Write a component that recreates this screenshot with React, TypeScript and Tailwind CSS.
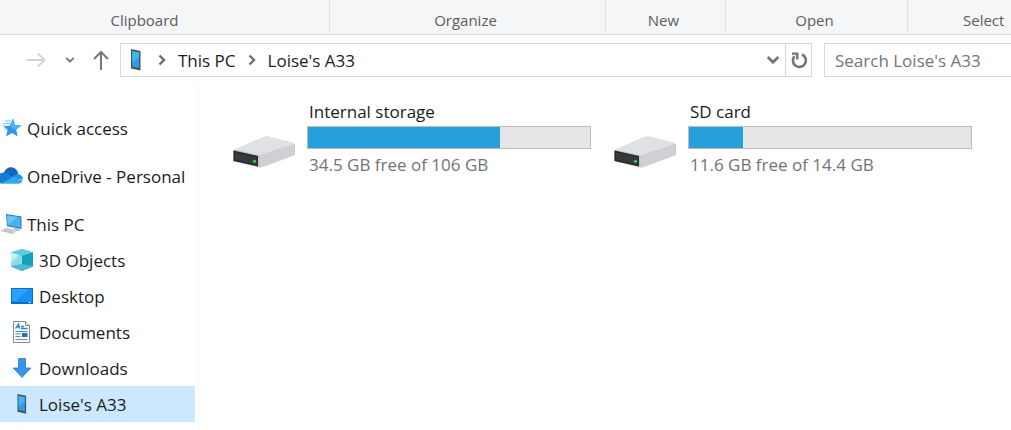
import type { ReactNode } from "react";

function PhoneIcon({ className }: { className: string }) {
  return (
    <svg viewBox="0 0 12 24" className={className} aria-hidden="true">
      <path d="M1 1 10.5 3V22.5L1 20.5Z" fill="#4a545d" />
      <path d="M2.2 3.2 9 4.6V19.8L2.2 18.4Z" fill="#2b9fe8" />
      <path d="M2.2 3.2 9 4.6V10L2.2 14Z" fill="#45b2f3" />
    </svg>
  );
}

function StarIcon() {
  return (
    <svg viewBox="0 0 22 22" className="h-[22px] w-[22px]" aria-hidden="true">
      <path d="M13 1.500 15 8 21.500 8.600 16.200 12.600 17.600 19.500 12 16 6 19.500 7.600 12.800 3.500 9.500 10 8.400Z" fill="#2e96e6" />
      <path d="M13 1.500 15 8 21.500 8.600 16.200 12.600 12.200 11.600 10 8.400Z" fill="#4db2f3" />
      <path d="M5 4h6M3.500 6.500h6.500M2.500 9h4M4 12h3" stroke="#7cc2f3" strokeWidth="1.100" />
    </svg>
  );
}

function CloudIcon() {
  return (
    <svg viewBox="1 0 24 22" className="h-[22px] w-6" aria-hidden="true">
      <path d="M5 7.500A7.300 7.300 0 0 1 19.300 9.300L13 13.500 4 8.800Z" fill="#1166bd" />
      <path d="M2 18.500A5.600 5.600 0 0 1 0 9 8 8 0 0 1 9 9L15 12.600 4 18.500Z" fill="#167dd2" />
      <path d="M13 12C15.500 9.400 18 9 19.400 9.300A5 5 0 0 1 24 14.400L16 14Z" fill="#1c96e0" />
      <path d="M2 18.300 14.500 12 23.600 15.500C23 17.500 21.300 18.700 19.300 18.700H5C3.800 18.700 2.700 18.500 2 18.300Z" fill="#30a9ee" />
    </svg>
  );
}

function ComputerIcon() {
  return (
    <svg viewBox="0 0 22 22" className="h-[22px] w-[22px]" aria-hidden="true">
      <path d="M6 1 21.500 3.500V16L7 13.300Z" fill="#2877b0" />
      <path d="M7 2.200 20.500 4.400V14.700L7.800 12.300Z" fill="#43b3ef" />
      <path d="M7 2.200 18 4 7.800 12.300Z" fill="#63c6f6" />
      <path d="M14 14.500 19 15.500 20.500 18 14 17.500Z" fill="#b6bec6" />
      <path d="M5 14.500 16.500 17 13 20.500 1 17.500Z" fill="#d9dee3" />
      <path d="M5 15.700 14 17.700M3.500 17 12.500 19" stroke="#a6afb8" strokeWidth=".7" />
      <path d="M1 17.500 13 20.500 16.500 17" fill="none" stroke="#a5afb8" strokeWidth=".8" />
    </svg>
  );
}

function CubeIcon() {
  return (
    <svg viewBox="0 0 22 22" className="h-[22px] w-[22px]" aria-hidden="true">
      <path d="M11 0 22 3.500V17.500L11 22 0 17.500V3.500Z" fill="#21a9c5" />
      <path d="M11 0 22 3.500 11 7 0 3.500Z" fill="#5fcbdf" />
      <path d="M0 3.500 11 7V15L0 17.500Z" fill="#8adeea" />
      <path d="M0 3.500 8 6 0 14Z" fill="#c2f1f5" />
      <path d="M11 7 22 3.500V17.500L11 15Z" fill="#149fbd" />
      <path d="M0 17.500 11 15 22 17.500 11 22Z" fill="#4dbbd0" />
    </svg>
  );
}

function DesktopIcon() {
  return (
    <svg viewBox="0 0 22 22" className="h-[22px] w-[22px]" aria-hidden="true">
      <rect x=".5" y="3.500" width="21" height="15" fill="#1593f3" stroke="#0b6fc4" />
      <path d="M1 4H18L5 16H1Z" fill="#2ba2f8" />
      <path d="M1 17.500H21" stroke="#0a65b2" />
      <path d="M17.500 17.500h2.500" stroke="#c3e6ff" />
    </svg>
  );
}

function DocumentIcon() {
  return (
    <svg viewBox="0 0 22 22" className="h-[22px] w-[22px]" aria-hidden="true">
      <path d="M2.500 .5H14.500L18.500 4.500V21.500H2.500Z" fill="#fbfcfd" stroke="#858c93" />
      <path d="M14.500 .5V4.500H18.500" fill="#e2e6e9" stroke="#858c93" />
      <path d="M4.500 7.500 7.500 3 8.500 7.500M5.500 6H8.500M10 5.500H13M10 7.500H16.500" fill="none" stroke="#248bc9" strokeWidth="1.300" />
      <path d="M4.500 10.500H16.500M4.500 13H9.500M4.500 15.500H9.500" stroke="#338fc8" strokeWidth="1.200" />
      <path d="M4.500 18.500H16.500" stroke="#8b9298" strokeWidth="1.200" />
      <rect x="11" y="12" width="5.500" height="4" fill="#2d6ea8" />
    </svg>
  );
}

function DownloadIcon() {
  return (
    <svg viewBox="0 0 22 22" className="h-[22px] w-[22px]" aria-hidden="true">
      <path d="M7.500 1.500H14.500V11H19.800L11 20.500 2.200 11H7.500Z" fill="#3693e5" stroke="#2680cf" strokeWidth=".8" />
    </svg>
  );
}

function MusicIcon() {
  return (
    <svg viewBox="0 0 22 22" className="h-[22px] w-[22px]" aria-hidden="true">
      <path d="M10.500 0C11 4 17 5 15.500 11 15 7.500 12.500 7 12 7V17A4 3.500 0 1 1 10.500 14Z" fill="#1f86c8" />
    </svg>
  );
}

function DriveIcon() {
  return (
    <svg viewBox="0 0 62 32" className="h-8 w-[62px] shrink-0" aria-hidden="true">
      <path d="M1 14 30 1.300Q33 .2 36 .8L60 7Q62 8 62 9.500V19L30 30.800Q27 32 24 31L1 25.500Q0 25 0 24V15Q0 14.300 1 14Z" fill="#c3c5ca" />
      <path d="M1 13.500 30 1.300Q33 .2 36 .8L60 7Q62 8 60 9L29 19Q27 19.600 25 19Z" fill="#e0e1e4" />
      <path d="M26.500 20Q27 18.800 30 18L61.500 8V19L30 30.800Q27.500 31.800 26.500 31Z" fill="#cfd0d5" />
      <path d="M.5 14.500 25 20V30.500L.5 25Z" fill="#292c2e" />
      <path d="M2 16.500 23.500 21.300V28.500L2 23.500Z" fill="#363a3b" />
      <circle cx="21.500" cy="25.300" r="1.600" fill="#40d14b" />
    </svg>
  );
}

function Chevron({ down = false, className }: { down?: boolean; className: string }) {
  return (
    <svg viewBox="0 0 12 12" className={className} fill="none" stroke="currentColor" strokeWidth="2.400" aria-hidden="true">
      <path d={down ? "M1.500 3.500 6 8 10.500 3.500" : "M3.500 1.500 8 6 3.500 10.500"} />
    </svg>
  );
}

function RibbonGroup({ label, className }: { label: string; className: string }) {
  return (
    <div className={`flex h-8 items-end border-[#e1e2e4] text-[15px] leading-6 text-[#5c5c5c] ${className}`}>
      {label}
    </div>
  );
}

type NavRowProps = { icon: ReactNode; label?: string; title?: string; nested?: boolean; selected?: boolean };

function NavRow({ icon, label, title, nested = false, selected = false }: NavRowProps) {
  return (
    <li>
      <a
        href="#"
        aria-label={title}
        aria-current={selected ? "page" : undefined}
        className={`mr-[3px] flex h-9 items-center whitespace-nowrap ${nested ? "pl-[11px]" : ""} ${selected ? "bg-[#cce8ff]" : ""}`}
      >
        <span className={`flex shrink-0 ${nested ? "w-7" : "w-[27px]"}`}>{icon}</span>
        {label && <span className="pt-0.5">{label}</span>}
      </a>
    </li>
  );
}

type Drive = { name: string; caption: string; used: number };

const drives: Drive[] = [
  { name: "Internal storage", caption: "34.5 GB free of 106 GB", used: 68 },
  { name: "SD card", caption: "11.6 GB free of 14.4 GB", used: 19 },
];

function DriveTile({ name, caption, used }: Drive) {
  return (
    <li className="flex w-[358px] items-center gap-3">
      <div className="pt-6">
        <DriveIcon />
      </div>
      <div className="min-w-0 flex-1">
        <div className="pl-0.5 leading-7">{name}</div>
        <div className="h-[23px] border border-[#bcbcbc] bg-[#e6e6e6]" role="meter" aria-label={name} aria-valuenow={used} aria-valuemin={0} aria-valuemax={100}>
          <div className="h-full bg-[#26a0da]" style={{ width: `${used}%` }} />
        </div>
        <div className="pl-0.5 leading-8 text-[#737373]">{caption}</div>
      </div>
    </li>
  );
}

export default function App() {
  return (
    <div className="flex h-screen flex-col overflow-hidden bg-white font-['Open_Sans','Noto_Sans',sans-serif] text-[17px] text-[#1b1b1b]">
      <header className="flex h-[35px] shrink-0 border-b border-[#dadbdc] bg-[#f5f6f7]">
        <RibbonGroup label="Clipboard" className="w-[330px] justify-center border-r pr-10" />
        <RibbonGroup label="Organize" className="w-[276px] justify-center border-r pr-1" />
        <RibbonGroup label="New" className="w-[120px] justify-center border-r pr-1" />
        <RibbonGroup label="Open" className="w-[182px] justify-center border-r pr-1" />
        <RibbonGroup label="Select" className="flex-1 pl-[55px]" />
      </header>

      <div className="flex shrink-0 pt-2">
        <div className="flex h-[34px] w-[120px] shrink-0 items-center pl-[26px] text-[#777777]">
          <button type="button" aria-label="Forward" className="text-[#d2d2d2]">
            <svg viewBox="0 0 20 20" className="h-5 w-5" fill="none" stroke="currentColor" strokeWidth="2">
              <path d="M1 10H19M12 3.500 18.500 10 12 16.500" />
            </svg>
          </button>
          <button type="button" aria-label="Recent locations" className="ml-[19px]">
            <Chevron down className="h-[10px] w-[10px]" />
          </button>
          <button type="button" aria-label="Up" className="ml-4">
            <svg viewBox="0 0 20 20" className="h-5 w-5" fill="none" stroke="currentColor" strokeWidth="2">
              <path d="M10 20V2M3 9 10 2 17 9" />
            </svg>
          </button>
        </div>
        <div className="flex h-[34px] flex-1 items-center border border-[#d9d9d9]">
          <PhoneIcon className="ml-[9px] h-6 w-3" />
          <Chevron className="ml-[14px] h-3 w-3 text-[#6b6b6b]" />
          <a href="#" className="ml-[10px] pt-0.5">This PC</a>
          <Chevron className="ml-[10px] h-3 w-3 text-[#6b6b6b]" />
          <a href="#" className="ml-[10px] pt-0.5">Loise's A33</a>
          <button type="button" aria-label="Previous locations" className="ml-auto flex w-6 justify-center text-[#777777]">
            <Chevron down className="h-[14px] w-[14px]" />
          </button>
          <button type="button" aria-label="Refresh" className="flex h-full w-[26px] items-center justify-center border-l border-[#d9d9d9] text-[#757575]">
            <svg viewBox="0 0 18 18" className="h-[18px] w-[18px]" fill="none" stroke="currentColor" strokeWidth="2.600">
              <path d="M12 3.500A6.500 6.500 0 1 1 4.500 5.200" />
              <path d="M2 2.600H7.300V8.600" strokeWidth="2.400" />
            </svg>
          </button>
        </div>
        <input
          type="search"
          aria-label="Search Loise's A33"
          placeholder="Search Loise's A33"
          className="ml-3 h-[34px] w-[187px] border border-r-0 border-[#d9d9d9] pl-[10px] outline-none placeholder:text-[#757575] placeholder:opacity-100"
        />
      </div>

      <main className="flex min-h-0 flex-1 pt-2">
        <nav className="w-[199px] shrink-0 overflow-hidden border-r border-[#f2f2f2] pt-[25px]" aria-label="Folders">
          <ul className="flex flex-col gap-3">
            <NavRow icon={<StarIcon />} label="Quick access" />
            <NavRow icon={<CloudIcon />} label="OneDrive - Personal" />
            <NavRow icon={<ComputerIcon />} label="This PC" />
          </ul>
          <ul>
            <NavRow nested icon={<CubeIcon />} label="3D Objects" />
            <NavRow nested icon={<DesktopIcon />} label="Desktop" />
            <NavRow nested icon={<DocumentIcon />} label="Documents" />
            <NavRow nested icon={<DownloadIcon />} label="Downloads" />
            <NavRow nested selected icon={<PhoneIcon className="ml-[5px] h-[22px] w-3" />} label="Loise's A33" />
            <NavRow nested icon={<MusicIcon />} title="Music" />
          </ul>
        </nav>
        <ul className="flex flex-1 flex-wrap content-start gap-[23px] pt-[13px] pl-[34px]">
          {drives.map((drive) => (
            <DriveTile key={drive.name} {...drive} />
          ))}
        </ul>
      </main>
    </div>
  );
}
